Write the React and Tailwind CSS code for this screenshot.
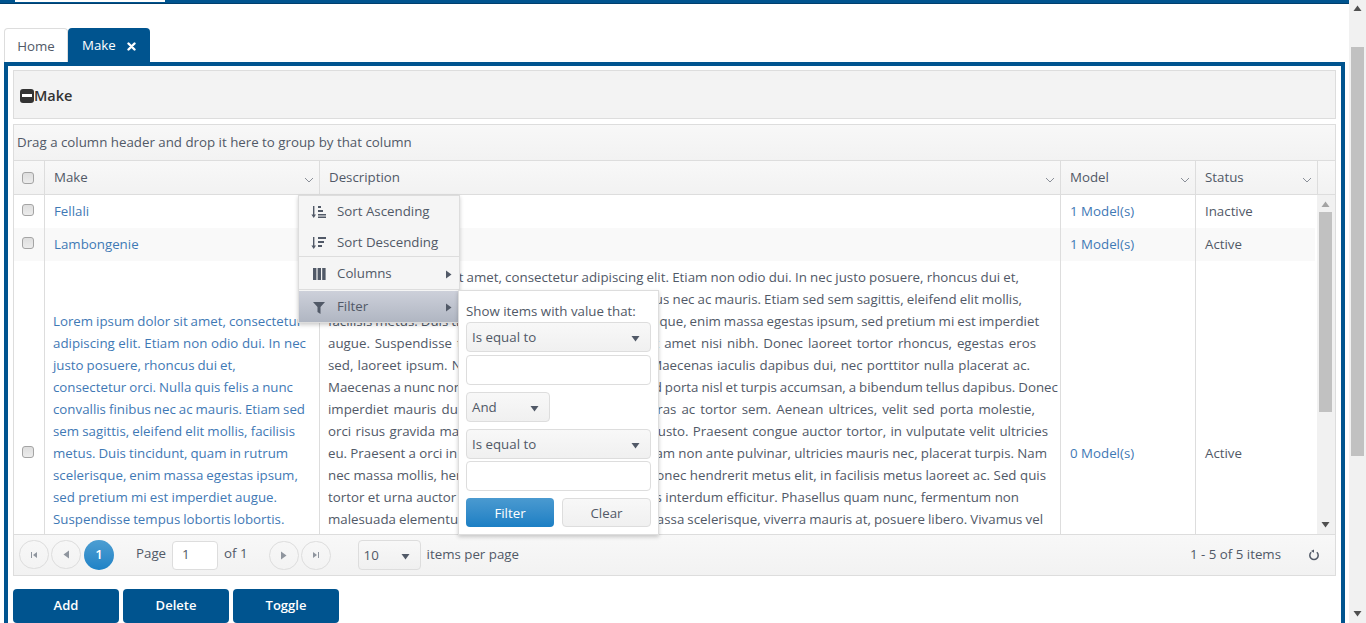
import React from "react";

// line text and the width it fills, so the wraps land where the grid wraps them
const descLines = [
  ["Lorem ipsum dolor sit amet, consectetur adipiscing elit. Etiam non odio dui. In nec justo posuere, rhoncus dui et,", 691],
  ["consectetur orci. Nulla quis felis a nunc convallis finibus nec ac mauris. Etiam sed sem sagittis, eleifend elit mollis,", 694],
  ["facilisis metus. Duis tincidunt, quam in rutrum scelerisque, enim massa egestas ipsum, sed pretium mi est imperdiet", 709],
  ["augue. Suspendisse tempus lobortis lobortis. Sed sit amet nisi nibh. Donec laoreet tortor rhoncus, egestas eros", 708],
  ["sed, laoreet ipsum. Nulla facilisi. Sed vel sem vitae. Maecenas iaculis dapibus dui, nec porttitor nulla placerat ac.", 702],
  ["Maecenas a nunc non diam tempor dictum augue. Sed porta nisl et turpis accumsan, a bibendum tellus dapibus. Donec", 721],
  ["imperdiet mauris dui, sed varius lorem erat vitae. Cras ac tortor sem. Aenean ultrices, velit sed porta molestie,", 707],
  ["orci risus gravida massa, at cursus nisl mi vitae sed justo. Praesent congue auctor tortor, in vulputate velit ultricies", 720],
  ["eu. Praesent a orci in lorem semper dictum eget. Nullam non ante pulvinar, ultricies mauris nec, placerat turpis. Nam", 719],
  ["nec massa mollis, hendrerit nunc vel, dictum mi ut. Donec hendrerit metus elit, in facilisis metus laoreet ac. Sed quis", 718],
  ["tortor et urna auctor tempus. Vivamus cursus ut lacus interdum efficitur. Phasellus quam nunc, fermentum non", 691],
  ["malesuada elementum, tincidunt quis nisi sit amet, massa scelerisque, viverra mauris at, posuere libero. Vivamus vel", 715],
  ["lectus sit amet sem aliquet tempor. Integer at nunc vitae ante dictum.", 440],
  ["Curabitur non tortor sed nibh feugiat luctus.", 290],
  ["Aliquam erat volutpat.", 150],
  ["Morbi id sapien eu quam viverra.", 210],
  ["Sed at nulla.", 80],
];

const makeLines = [
  ["Lorem ipsum dolor sit amet, consectetur", 249],
  ["adipiscing elit. Etiam non odio dui. In nec", 253],
  ["justo posuere, rhoncus dui et,", 182],
  ["consectetur orci. Nulla quis felis a nunc", 240],
  ["convallis finibus nec ac mauris. Etiam sed", 252],
  ["sem sagittis, eleifend elit mollis, facilisis", 242],
  ["metus. Duis tincidunt, quam in rutrum", 234],
  ["scelerisque, enim massa egestas ipsum,", 242],
  ["sed pretium mi est imperdiet augue.", 224],
  ["Suspendisse tempus lobortis lobortis.", 230],
  ["Sed sit amet nisi nibh. Donec laoreet", 225],
  ["tortor rhoncus, egestas eros sed.", 200],
  ["Nulla facilisi.", 80],
];

const Lines = ({ items }) =>
  items.map(([text, width]) => (
    <div key={text} className="whitespace-nowrap [word-spacing:-0.5px] [text-align-last:justify]" style={{ width }}>
      {text}
    </div>
  ));

const Tri = ({ dir = "down", className = "" }) => (
  <svg width="9" height="9" viewBox="0 0 9 9" className={className} fill="currentColor">
    {dir === "down" && <path d="M0.5 2h8l-4 5.5z" />}
    {dir === "up" && <path d="M0.5 7h8l-4-5.5z" />}
    {dir === "right" && <path d="M2 0.5v8l5.5-4z" />}
    {dir === "left" && <path d="M7 0.5v8l-5.5-4z" />}
  </svg>
);

const Chevron = () => (
  <svg width="10" height="6" viewBox="0 0 10 6" fill="none" stroke="#8a8f98" strokeWidth="1">
    <path d="M1 1l4 4 4-4" />
  </svg>
);

const Check = ({ className = "" }) => (
  <div className={`h-3 w-3 rounded-[3px] border border-[#a4a4a4] bg-gradient-to-b from-[#dedede] to-[#ececec] ${className}`} />
);

const HeaderCell = ({ label }) => (
  <div className="flex items-center justify-between border-l border-[#dddddd] pl-[9px] pr-[5px]">
    <span>{label}</span>
    <span className="mt-1"><Chevron /></span>
  </div>
);

const PagerBtn = ({ children }) => (
  <div className="flex h-[29px] w-[30px] items-center justify-center rounded-full border border-[#dddddd] text-[#8f959e]">
    {children}
  </div>
);

const SelectBox = ({ label, className = "" }) => (
  <div className={`flex h-[30px] items-center justify-between rounded-[4px] border border-[#dddddd] bg-gradient-to-b from-[#f8f8f8] to-[#f0f0f0] pl-[5px] pr-[10px] pt-[2px] ${className}`}>
    <span>{label}</span>
    <Tri className="text-[#515967]" />
  </div>
);

const MenuItem = ({ icon, label, arrow, className = "" }) => (
  <div className={`flex items-center pl-[11px] pr-[6px] ${className}`}>
    <span className="flex w-[27px] items-center">{icon}</span>
    <span className="flex-1">{label}</span>
    {arrow && <Tri dir="right" className="text-[#515967]" />}
  </div>
);

const SortAscIcon = () => (
  <svg width="17" height="14" viewBox="0 0 17 14" fill="#515967">
    <path d="M3 1h1.4v8.5H6L3.7 13 1.4 9.5H3z" />
    <path d="M8 1h3v2H8zM8 5h5v2H8zM8 9h8v1.5H8zM8 11.5h8V13H8z" />
  </svg>
);

const SortDescIcon = () => (
  <svg width="17" height="14" viewBox="0 0 17 14" fill="#515967">
    <path d="M3 1h1.4v8.5H6L3.7 13 1.4 9.5H3z" />
    <path d="M8 1h8v2H8zM8 5h6v2H8zM8 9h4v2H8z" />
  </svg>
);

export default function App() {
  return (
    <div
      className="flex h-[623px] w-full overflow-hidden bg-white text-[13.3px] text-[#515967]"
      style={{ fontFamily: '"Open Sans", "Noto Sans", sans-serif' }}
    >
      <div className="w-[1349px] shrink-0">
        {/* Top bar */}
        <div className="h-1 border-b border-[#003f6e] bg-[#00548f]">
          <div className="ml-[15px] h-0.5 w-[150px] bg-white" />
        </div>

        {/* Tabs */}
        <div className="ml-1 mt-6 flex h-[34px] items-stretch">
          <div className="flex w-[64px] items-center justify-center rounded-t-[4px] border border-b-0 border-[#dddddd] bg-white pt-[2px]">Home</div>
          <div className="flex w-[82px] items-center gap-[11px] rounded-t-[4px] bg-[#00548f] pl-[14px] pt-[2px] text-white">
            <span>Make</span>
            <svg width="9" height="9" viewBox="0 0 9 9" stroke="white" strokeWidth="2.4" strokeLinecap="round">
              <path d="M1.5 1.5l6 6M7.5 1.5l-6 6" />
            </svg>
          </div>
        </div>

        {/* Panel */}
        <div className="ml-1 h-[600px] w-[1341px] border-4 border-[#00548f] px-[5px] pt-1">
          <div className="flex h-[49px] items-center border border-[#dddddd] bg-[#f3f3f3] pl-[6px] pt-[2px] text-[14.5px] font-semibold text-[#333333]">
            <span className="flex h-[14px] w-[14px] items-center justify-center rounded-[3px] bg-[#333333]">
              <span className="h-[3px] w-[10px] bg-white" />
            </span>
            Make
          </div>

          {/* Grid */}
          <div className="relative mt-[5px] h-[452px] border border-[#dddddd]">
            <div className="flex h-[36px] items-center border-b border-[#dddddd] bg-gradient-to-b from-[#f8f8f8] to-[#f2f2f2] pl-[3px]">
              Drag a column header and drop it here to group by that column
            </div>
            <div className="grid h-[34px] grid-cols-[30px_275px_741px_135px_122px_18px] border-b border-[#dddddd] bg-gradient-to-b from-[#f8f8f8] to-[#f2f2f2]">
              <div className="flex items-center justify-center pr-[3px]"><Check /></div>
              <HeaderCell label="Make" />
              <HeaderCell label="Description" />
              <HeaderCell label="Model" />
              <HeaderCell label="Status" />
              <div className="border-l border-[#dddddd]" />
            </div>

            {/* Body */}
            <div className="flex h-[339px] overflow-hidden">
              <div className="w-[1303px] shrink-0">
                <div className="grid h-[33px] grid-cols-[30px_275px_741px_135px_120px] items-stretch">
                  <div className="flex items-center justify-center pb-[3px] pr-[3px]"><Check /></div>
                  <div className="flex items-center border-l border-[#dddddd] pl-[9px] text-[#3f79b5]">Fellali</div>
                  <div className="border-l border-[#dddddd]" />
                  <div className="flex items-center border-l border-[#dddddd] pl-[9px] text-[#3f79b5]">1 Model(s)</div>
                  <div className="flex items-center border-l border-[#dddddd] pl-[9px]">Inactive</div>
                </div>
                <div className="grid h-[33px] w-[1301px] grid-cols-[30px_275px_741px_135px_120px] items-stretch bg-[#f9f9f9]">
                  <div className="flex items-center justify-center pb-[3px] pr-[3px]"><Check /></div>
                  <div className="flex items-center border-l border-[#dddddd] pl-[9px] text-[#3f79b5]">Lambongenie</div>
                  <div className="border-l border-[#dddddd]" />
                  <div className="flex items-center border-l border-[#dddddd] pl-[9px] text-[#3f79b5]">1 Model(s)</div>
                  <div className="flex items-center border-l border-[#dddddd] pl-[9px]">Active</div>
                </div>
                <div className="grid h-[384px] grid-cols-[30px_275px_741px_135px_120px] items-stretch leading-[22px]">
                  <div className="flex items-center justify-center pb-[3px] pr-[3px]"><Check /></div>
                  <div className="flex flex-col justify-center border-l border-[#dddddd] pl-[8px] text-[#3f79b5]">
                    <Lines items={makeLines} />
                  </div>
                  <div className="flex flex-col justify-center overflow-hidden border-l border-[#dddddd] pl-[8px]">
                    <Lines items={descLines} />
                  </div>
                  <div className="flex items-center border-l border-[#dddddd] pl-[9px] text-[#3f79b5]">0 Model(s)</div>
                  <div className="flex items-center border-l border-[#dddddd] pl-[9px]">Active</div>
                </div>
              </div>
              {/* Inner scrollbar */}
              <div className="flex w-[18px] flex-col items-center justify-between bg-[#f1f1f1] py-[5px] pr-px text-[#a3a3a3]">
                <Tri dir="up" />
                <div className="mb-auto mt-[3px] h-[200px] w-[13px] bg-[#c1c1c1]" />
                <Tri className="text-[#505050]" />
              </div>
            </div>

            {/* Pager */}
            <div className="flex h-[41px] items-center border-t border-[#dddddd] bg-gradient-to-b from-[#f8f8f8] to-[#f2f2f2] pl-[5px] pr-[15px]">
              <div className="flex gap-[2px]">
                <PagerBtn>
                  <svg width="8" height="8" viewBox="0 0 8 8" fill="currentColor"><path d="M1 1h1v6H1zM7 1v6L3 4z" /></svg>
                </PagerBtn>
                <PagerBtn><Tri dir="left" /></PagerBtn>
                <div className="ml-px flex h-[30px] w-[30px] items-center justify-center rounded-full bg-gradient-to-b from-[#4c9ed2] to-[#1d82c6] font-semibold text-white">1</div>
              </div>
              <span className="ml-[22px] pb-[2px]">Page</span>
              <div className="ml-[6px] flex h-[29px] w-[46px] items-center rounded-[4px] border border-[#dddddd] bg-white pl-[9px]">1</div>
              <span className="ml-[6px] pb-[2px]">of 1</span>
              <div className="ml-[21px] flex gap-[2px]">
                <PagerBtn><Tri dir="right" /></PagerBtn>
                <PagerBtn>
                  <svg width="8" height="8" viewBox="0 0 8 8" fill="currentColor"><path d="M6 1h1v6H6zM1 1v6l4-3z" /></svg>
                </PagerBtn>
              </div>
              <SelectBox label="10" className="ml-[27px] w-[63px]" />
              <span className="ml-[6px]">items per page</span>
              <span className="ml-auto">1 - 5 of 5 items</span>
              <svg className="ml-[27px]" width="12" height="12" viewBox="0 0 12 12" fill="none" stroke="#515967" strokeWidth="1.5">
                <path d="M3.2 3.2a4.2 4.2 0 1 0 5.6 0" />
                <path d="M6 0.5v3.2l-3-1.6z" fill="#515967" stroke="none" />
              </svg>
            </div>

            {/* Column menu */}
            <div className="absolute left-[284px] top-[70px] z-10 w-[162px] border border-[#dddddd] bg-[#f5f5f5] shadow-[0_2px_4px_rgba(0,0,0,0.2)]">
              <MenuItem icon={<SortAscIcon />} label="Sort Ascending" className="h-[32px]" />
              <MenuItem icon={<SortDescIcon />} label="Sort Descending" className="h-[29px] border-b border-[#dddddd] pt-px" />
              <MenuItem
                icon={<svg className="ml-[3px]" width="13" height="12" viewBox="0 0 13 12" fill="#515967"><path d="M0 0h3.4v12H0zM4.6 0H8v12H4.6zM9.2 0h3.4v12H9.2z" /></svg>}
                label="Columns"
                arrow
                className="h-[33px] border-b border-[#dddddd] pt-[2px]"
              />
              <MenuItem
                icon={<svg className="ml-[3px]" width="12" height="14" viewBox="0 0 12 14" fill="#515967"><path d="M0 2h12L7.5 7v7l-3-2V7z" /></svg>}
                label="Filter"
                arrow
                className="mt-px h-[31px] bg-gradient-to-b from-[#cdd0da] to-[#b0b6c2] pt-px"
              />
            </div>

            {/* Filter popup */}
            <div className="absolute left-[444px] top-[165px] z-20 flex h-[245px] w-[201px] flex-col border border-[#dddddd] bg-white px-[7px] pt-[10px] shadow-[0_2px_4px_rgba(0,0,0,0.2)]">
              <div className="h-[20px] whitespace-nowrap leading-[20px]">Show items with value that:</div>
              <SelectBox label="Is equal to" className="mt-px" />
              <div className="mt-[3px] h-[30px] rounded-[4px] border border-[#dddddd] bg-white" />
              <SelectBox label="And" className="mt-[7px] w-[84px]" />
              <SelectBox label="Is equal to" className="mt-[7px]" />
              <div className="mt-[2px] h-[30px] rounded-[4px] border border-[#dddddd] bg-white" />
              <div className="mt-[7px] flex justify-between">
                <div className="flex h-[29px] w-[88px] items-center justify-center rounded-[4px] bg-gradient-to-b from-[#4a9ad0] to-[#1a7fc4] pt-[2px] text-white">Filter</div>
                <div className="flex h-[29px] w-[89px] items-center justify-center rounded-[4px] border border-[#dddddd] bg-gradient-to-b from-[#f8f8f8] to-[#f0f0f0] pt-[2px]">Clear</div>
              </div>
            </div>
          </div>

          {/* Actions */}
          <div className="mt-[13px] flex gap-1">
            {["Add", "Delete", "Toggle"].map((b) => (
              <div key={b} className="flex h-[34px] w-[106px] items-center justify-center rounded-[4px] bg-[#00548f] text-[13px] font-semibold text-white">{b}</div>
            ))}
          </div>
        </div>
      </div>

      {/* Page scrollbar */}
      <div className="flex flex-1 flex-col items-center bg-[#f1f1f1] pb-[5px] pt-[4px] text-[#505050]">
        <Tri dir="up" />
        <div className="mt-[34px] h-[409px] w-[13px] bg-[#c1c1c1]" />
        <Tri className="mt-auto" />
      </div>
    </div>
  );
}
